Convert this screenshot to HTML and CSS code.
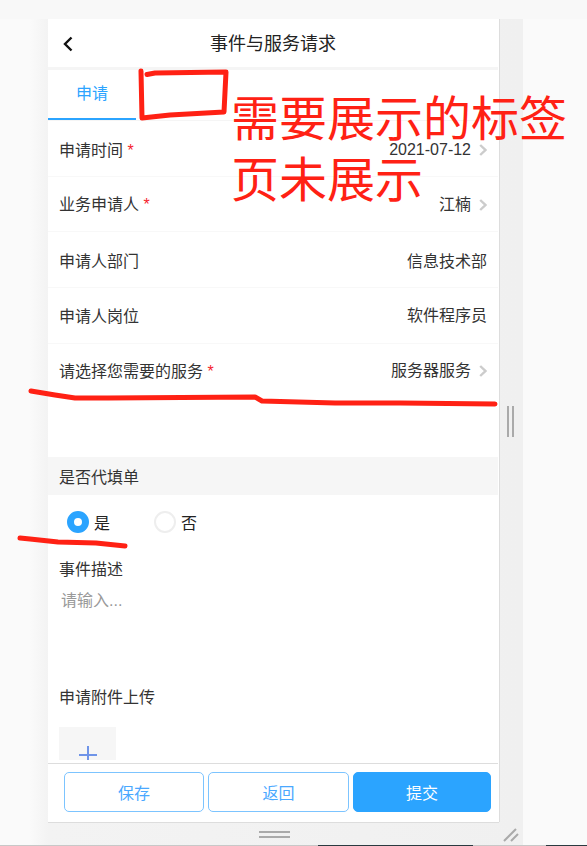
FILE: index.html
```html
<!DOCTYPE html>
<html lang="zh-CN">
<head>
<meta charset="utf-8">
<title>事件与服务请求</title>
<link rel="stylesheet" href="styles.css">
</head>
<body>
<div class="stage">
  <div class="shell">
    <main class="phone">
      <header class="topbar">
        <svg class="back" viewBox="0 0 12 16" width="12" height="16"><path d="M9.5 1.5 3 8l6.5 6.5" fill="none" stroke="#111" stroke-width="2.4"/></svg>
        <h1 class="title">事件与服务请求</h1>
      </header>
      <nav class="tabs"><div class="tab">申请</div></nav>
      <div class="scroll">
        <div class="row line r1"><span class="label">申请时间 <i class="req">*</i></span><span class="value num">2021-07-12<svg class="chev" viewBox="0 0 8 12" width="8" height="12"><path d="M1.2 1 6.4 6 1.2 11" fill="none" stroke="#ccc" stroke-width="2.4"/></svg></span></div>
        <div class="row line r2"><span class="label">业务申请人 <i class="req">*</i></span><span class="value">江楠<svg class="chev" viewBox="0 0 8 12" width="8" height="12"><path d="M1.2 1 6.4 6 1.2 11" fill="none" stroke="#ccc" stroke-width="2.4"/></svg></span></div>
        <div class="row line r3"><span class="label">申请人部门</span><span class="value">信息技术部</span></div>
        <div class="row line r4"><span class="label">申请人岗位</span><span class="value">软件程序员</span></div>
        <div class="row r5"><span class="label">请选择您需要的服务 <i class="req">*</i></span><span class="value">服务器服务<svg class="chev" viewBox="0 0 8 12" width="8" height="12"><path d="M1.2 1 6.4 6 1.2 11" fill="none" stroke="#ccc" stroke-width="2.4"/></svg></span></div>
        <div class="section">是否代填单</div>
        <div class="radios">
          <span class="radio"><i class="dot on"></i>是</span>
          <span class="radio"><i class="dot"></i>否</span>
        </div>
        <div class="field-label">事件描述</div>
        <div class="placeholder">请输入...</div>
        <div class="field-label">申请附件上传</div>
        <div class="upload"><svg viewBox="0 0 18 18" width="18" height="18"><path d="M9 0v18M0 9h18" stroke="#6f94e8" stroke-width="2" fill="none"/></svg></div>
      </div>
      <footer class="actions">
        <button class="btn">保存</button>
        <button class="btn">返回</button>
        <button class="btn primary">提交</button>
      </footer>
    </main>
    <i class="grip grip-right"></i>
    <i class="grip grip-bottom"></i>
    <svg class="grip-corner" viewBox="0 0 16 15" width="16" height="15"><path d="M1 14 13 2M8 14l7-7" stroke="#aaa" stroke-width="2" fill="none"/></svg>
  </div>
  <div class="edge"><span class="edge-dark"></span><span class="edge-dark edge-far"></span></div>
</div>
<svg class="ink" viewBox="0 0 587 846" width="587" height="846">
  <g fill="none" stroke="#ff2114" stroke-width="5" stroke-linecap="round" stroke-linejoin="round">
    <path d="M147 74.500 155 73 226 72 224 112 170 115 142 118 141 71"/>
    <path d="M31 391 55 395 75 398 108 398 255 397 262 401 335 403 400 403 495 404"/>
    <path d="M20 538 30 539 58 542 96 543 125 546"/>
  </g>
</svg>
<div class="note"><p class="note-line">需要展示的标签</p><p class="note-line">页未展示</p></div>
</body>
</html>
```
FILE: styles.css
```css
* { box-sizing: border-box; }
html, body { margin: 0; height: 846px; overflow: hidden; }
body {
  background: linear-gradient(180deg, #f8f8f8 0, #f8f8f8 19px, #fafafa 19px);
  color: #333;
  font-family: "Liberation Sans", "Noto Sans CJK SC", sans-serif;
  font-size: 16px;
  position: relative;
}
.stage { height: 846px; display: flex; flex-direction: column; }
.shell {
  width: 523px;
  height: 845px;
  padding: 19px 24px 23px 48px;
  background: linear-gradient(90deg, #fafafa 0, #fafafa 30px, #f3f3f3 48px, #f0f0f0 100%) no-repeat left bottom / 100% 826px;
  position: relative;
}
.phone {
  height: 803px;
  width: 451px;
  padding-right: 1px;
  background: #fff;
  box-shadow: 1px 0 0 #ddd, 0 1px 0 #ddd;
  display: flex;
  flex-direction: column;
}
.topbar {
  height: 51px;
  flex: none;
  border-bottom: 3px solid #f5f5f5;
  display: flex;
  align-items: center;
  justify-content: center;
  position: relative;
  padding-bottom: 2px;
}
.back { position: absolute; left: 14px; top: 17px; }
.title { margin: 0; font-size: 18px; font-weight: 400; color: #222; }
.tabs { height: 51px; flex: none; border-bottom: 1px solid #f5f5f5; }
.tab {
  width: 88px;
  height: 50px;
  line-height: 47px;
  text-align: center;
  color: #2ba4ff;
  border-bottom: 2px solid #2ba4ff;
}
.scroll { flex: 1; min-height: 0; overflow: hidden; }
.row {
  display: flex;
  justify-content: space-between;
  padding: 0 11px 0 11px;
}
.line { border-bottom: 1px solid #f8f8f8; }
.r1 { height: 56px; padding-top: 19px; }
.r2 { height: 55px; padding-top: 17px; }
.r3 { height: 56px; padding-top: 19px; }
.r4 { height: 56px; padding-top: 18px; }
.r5 { height: 113px; padding-top: 17px; }
.label { color: #333; line-height: 22px; }
.req { color: #f5222d; font-style: normal; }
.value { display: flex; align-items: center; height: 22px; line-height: 22px; color: #333; }
.r1 .value, .r5 .value { margin-top: -1px; }
.r4 .value { margin-top: -1px; }
.r1 .value { line-height: 16px; }
.chev { margin-left: 8px; flex: none; }
.section {
  height: 38px;
  line-height: 42px;
  background: #f6f6f6;
  padding-left: 11px;
  color: #333;
}
.radios { height: 63px; padding: 16px 0 0 19px; display: flex; gap: 44px; }
.radio { display: flex; align-items: center; height: 22px; gap: 5px; color: #222; }
.dot {
  width: 22px;
  height: 22px;
  border-radius: 50%;
  border: 2px solid #eee;
  background: #fff;
}
.dot.on { border: 7px solid #2ba4ff; }
.field-label { padding-left: 11px; height: 22px; line-height: 24px; color: #333; }
.placeholder { padding: 10px 0 0 13px; height: 106px; line-height: 22px; color: #999; }
.upload {
  width: 57px;
  height: 33px;
  margin: 19px 0 0 11px;
  background: #f6f6f6;
  overflow: hidden;
  display: flex;
  justify-content: center;
  padding-top: 19px;
}
.actions {
  height: 59px;
  flex: none;
  border-top: 1px solid #ddd;
  padding: 8px 0 10px 16px;
  display: flex;
  gap: 4px;
}
.btn {
  flex: 0 0 140px;
  height: 40px;
  border: 1px solid #7cc4ff;
  border-radius: 5px;
  background: #fff;
  color: #4aa8ff;
  font: inherit;
}
.btn + .btn { flex-basis: 141px; }
.btn.primary { flex-basis: 138px; background: #2ba4ff; border-color: #2ba4ff; color: #fff; }
.grip { position: absolute; }
.grip-right { left: 507px; top: 406px; width: 7px; height: 31px; border-left: 2px solid #aaa; border-right: 2px solid #aaa; }
.grip-bottom { left: 259px; top: 831px; width: 31px; height: 7px; border-top: 2px solid #aaa; border-bottom: 2px solid #aaa; }
.grip-corner { position: absolute; left: 503px; top: 827px; }
.edge { height: 1px; background: #c8c8c8; position: relative; }
.edge-dark { position: absolute; left: 318px; width: 155px; height: 1px; background: #2a3a40; }
.edge-far { left: 546px; width: 41px; }
.ink { position: absolute; left: 0; top: 0; pointer-events: none; }
.note {
  position: absolute;
  left: 231px;
  top: 98px;
  color: #ff2114;
  font-size: 48px;
  line-height: 44px;
  white-space: nowrap;
}
.note-line { margin: 0 0 17px; }
```
